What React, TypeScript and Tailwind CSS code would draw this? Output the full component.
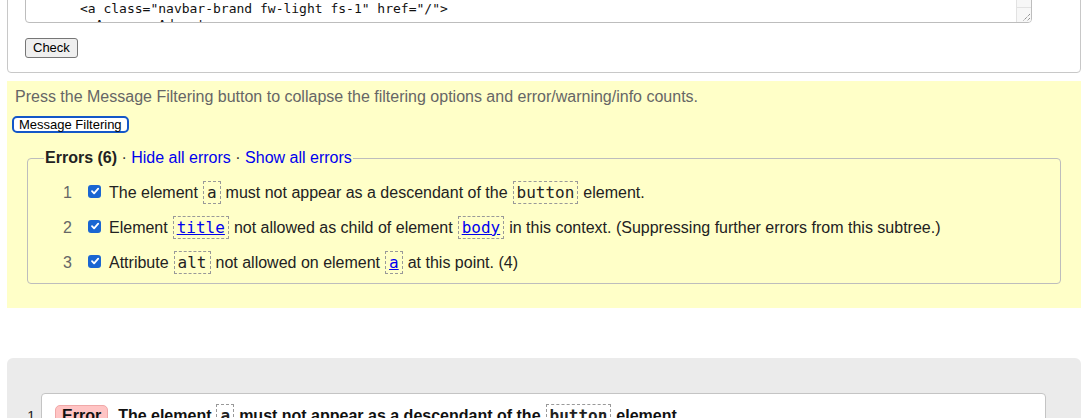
import React from 'react';

const Code = ({ children, link = false }: { children: React.ReactNode; link?: boolean }) => (
    <code
        className={`inline-block mx-[5px] px-[3px] leading-[21px] border border-dashed border-[#999] font-['DejaVu_Sans_Mono',monospace] text-[16px] ${
            link ? 'text-[#0000ee] underline' : 'text-[#222]'
        }`}
    >
        {children}
    </code>
);

const Check = () => (
    <span className="inline-flex items-center justify-center w-[13px] h-[13px] rounded-[3px] bg-[#1a66d2] shrink-0">
        <svg width="10" height="10" viewBox="0 0 10 10">
            <path d="M2 5.2 L4.1 7.3 L8.2 2.6" fill="none" stroke="white" strokeWidth="1.8" strokeLinecap="round" strokeLinejoin="round" />
        </svg>
    </span>
);

const Row = ({ n, children }: { n: number; children: React.ReactNode }) => (
    <li className="flex items-center h-[35px]">
        <span className="w-[45px] pr-[1px] text-right text-[#666]">{n}</span>
        <span className="ml-[15px] mr-[8px] -mt-[3px] flex"><Check /></span>
        <span className="text-[#222]">{children}</span>
    </li>
);

const App = () => {
    const lines = [
        '<nav class="navbar navbar-expand-lg">',
        '  <div class="container">',
        '      <a class="navbar-brand fw-light fs-1" href="/">',
        '        Awesome Adventures',
    ];

    return (
        <div className="font-['Liberation_Sans',Arial,sans-serif] text-[16px] bg-white min-h-[418px] overflow-hidden">
            {/* Input form */}
            <div className="-mt-[40px] ml-[7px] w-[1074px] border border-[#c8c8c8] rounded-b-[4px] pl-[17px] pb-[14px]">
                <div className="w-[1007px] h-[62px] border border-[#bdbdbd] rounded-[4px] flex overflow-hidden">
                    <pre className="flex-1 font-['DejaVu_Sans_Mono',monospace] text-[13px] leading-[16px] text-[#111] pl-[7px] pt-[7px]">
                        {lines.join('\n')}
                    </pre>
                    <div className="w-[15px] border-l border-[#e2e2e2] bg-[#f7f7f7] flex flex-col justify-end">
                        <div className="h-[15px] border-t border-[#e2e2e2] flex items-end justify-end">
                            <svg width="10" height="10" viewBox="0 0 10 10">
                                <path d="M9 2 L2 9 M9 6 L6 9" stroke="#666" strokeWidth="1" strokeDasharray="1 1" />
                            </svg>
                        </div>
                    </div>
                </div>
                <button className="block mt-[15px] h-[20px] px-[7px] text-[13px] leading-[16px] text-black bg-[#efefef] border border-[#767676] rounded-[3px]">
                    Check
                </button>
            </div>

            {/* Message filtering */}
            <div className="mt-[8px] ml-[7px] w-[1074px] bg-[#ffffc8] pt-[7px] pb-[24px]">
                <p className="pl-[8px] text-[#666] leading-[18px]">
                    Press the Message Filtering button to collapse the filtering options and error/warning/info counts.
                </p>
                <button className="block mt-[10px] ml-[5px] h-[17px] px-[5px] text-[13px] leading-[13px] text-black bg-white border-2 border-[#1457c8] rounded-[5px]">
                    Message Filtering
                </button>
                <fieldset className="mt-[16px] ml-[20px] w-[1034px] border border-[#bdbdbd] rounded-[4px] pl-[16px] pb-[3px]">
                    <legend className="px-[1px] leading-[18px]">
                        <b className="text-[#222]">Errors (6)</b>
                        <span className="text-[#333]"> · </span>
                        <a className="text-[#0000ee] cursor-pointer">Hide all errors</a>
                        <span className="text-[#333]"> · </span>
                        <a className="text-[#0000ee] cursor-pointer">Show all errors</a>
                    </legend>
                    <ul className="-ml-[16px] pt-[8px]">
                        <Row n={1}>
                            The element<Code>a</Code>must not appear as a descendant of the<Code>button</Code>element.
                        </Row>
                        <Row n={2}>
                            Element<Code link>title</Code>not allowed as child of element<Code link>body</Code>in this context. (Suppressing further errors from this subtree.)
                        </Row>
                        <Row n={3}>
                            Attribute<Code>alt</Code>not allowed on element<Code link>a</Code>at this point. (4)
                        </Row>
                    </ul>
                </fieldset>
            </div>

            {/* Results */}
            <div className="mt-[50px] ml-[7px] w-[1074px] bg-[#ebebeb] rounded-t-[6px] pt-[35px] pb-[20px]">
                <ol className="flex">
                    <li className="flex w-full">
                        <span className="w-[34px] pt-[13px] text-right pr-[6px] text-[14px] text-[#222]">1</span>
                        <div className="w-[1005px] bg-white border border-[#c4c4c4] rounded-[4px] pl-[13px] pt-[10px] pb-[20px] flex items-center">
                            <span className="px-[6px] rounded-[5px] bg-[#ffc4c4] border border-[#f0a8a8] font-bold text-[#111] leading-[20px]">Error</span>
                            <span className="ml-[10px] font-bold text-[#111]">
                                The element<Code>a</Code>must not appear as a descendant of the<Code>button</Code>element.
                            </span>
                        </div>
                    </li>
                </ol>
            </div>
        </div>
    );
};

export default App;
